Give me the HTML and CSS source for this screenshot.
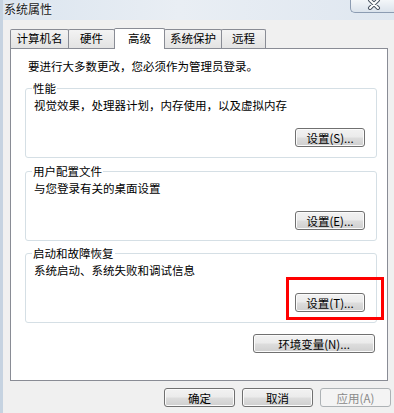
FILE: index.html
```html
<!DOCTYPE html>
<html lang="zh-CN">
<head>
<meta charset="utf-8">
<title>系统属性</title>
<link rel="stylesheet" href="styles.css">
</head>
<body>
<div class="window">
  <div class="titlebar">
    <span class="title">系统属性</span>
    <div class="close">
      <svg width="14" height="10" viewBox="0 0 14 10">
        <path d="M3 0 L11 8 M11 0 L3 8" stroke="#4b5563" stroke-width="4" stroke-linecap="round"/>
        <path d="M3 0 L11 8 M11 0 L3 8" stroke="#ffffff" stroke-width="2" stroke-linecap="round"/>
      </svg>
    </div>
  </div>
  <div class="client">
    <div class="tabs">
      <div class="tab t1">计算机名</div>
      <div class="tab t2">硬件</div>
      <div class="tab t3 active">高级</div>
      <div class="tab t4">系统保护</div>
      <div class="tab t5">远程</div>
    </div>
    <div class="panel">
      <p class="intro">要进行大多数更改，您必须作为管理员登录。</p>
      <fieldset class="group g1">
        <legend>性能</legend>
        <div class="group-body">
          <span class="desc">视觉效果，处理器计划，内存使用，以及虚拟内存</span>
          <button class="btn set">设置(S)...</button>
        </div>
      </fieldset>
      <fieldset class="group g2">
        <legend>用户配置文件</legend>
        <div class="group-body">
          <span class="desc">与您登录有关的桌面设置</span>
          <button class="btn set">设置(E)...</button>
        </div>
      </fieldset>
      <fieldset class="group g3">
        <legend>启动和故障恢复</legend>
        <div class="group-body">
          <span class="desc">系统启动、系统失败和调试信息</span>
          <button class="btn set">设置(T)...</button>
        </div>
      </fieldset>
      <div class="env-row">
        <button class="btn env">环境变量(N)...</button>
      </div>
    </div>
    <div class="actions">
      <button class="btn act">确定</button>
      <button class="btn act">取消</button>
      <button class="btn act" disabled>应用(A)</button>
    </div>
  </div>
  <div class="highlight"></div>
</div>
</body>
</html>
```
FILE: styles.css
```css
* { box-sizing: border-box; }
html, body {
  margin: 0;
  padding: 0;
}
body {
  width: 394px;
  height: 413px;
  overflow: hidden;
  background: #f0f0f0;
  font-family: "Noto Sans CJK SC", "Liberation Sans", sans-serif;
  font-size: 11.5px;
  line-height: 14px;
  color: #000;
}
.window {
  position: relative;
  width: 394px;
  height: 413px;
  border-left: 3px solid #c6d3e1;
}
.titlebar {
  height: 20px;
  display: flex;
  align-items: flex-start;
  background: linear-gradient(90deg, #dbe5ef 0%, #e9eef4 45%, #dfe7f0 100%);
}
.title {
  margin: 2px 0 0 1px;
  font-size: 12px;
  line-height: 14px;
  color: #1a1a1a;
  text-shadow: 0 0 4px #ffffff;
}
.close {
  margin-left: auto;
  margin-top: -1px;
  width: 44px;
  height: 14px;
  border: 1px solid #8c9cb2;
  border-right: none;
  border-radius: 0 0 0 5px;
  background: linear-gradient(#f3f6f9, #dbe3ec);
  display: flex;
  justify-content: center;
  align-items: flex-start;
  padding-top: 0;
  padding-left: 2px;
}
.client {
  padding: 8px 0 0 7px;
}
.tabs {
  display: flex;
  align-items: flex-end;
  height: 20px;
}
.tab {
  height: 19px;
  margin-left: -1px;
  border: 1px solid #898c95;
  border-bottom: none;
  border-radius: 2px 2px 0 0;
  background: linear-gradient(#f3f3f3, #e3e3e3);
  text-align: center;
  line-height: 17px;
  white-space: nowrap;
}
.t1 { margin-left: 0; width: 59px; }
.t2 { width: 47px; }
.t3 { width: 51px; }
.t4 { width: 58px; }
.t5 { width: 45px; }
.tab.active {
  position: relative;
  z-index: 1;
  height: 21px;
  margin-bottom: -1px;
  background: #ffffff;
  line-height: 18px;
}
.panel {
  width: 378px;
  height: 333px;
  border: 1px solid #898c95;
  background: #ffffff;
  padding: 10px 10px 0 14px;
}
.intro {
  margin: 0;
  padding-left: 3px;
}
.group {
  margin: 6px 0 0 0;
  padding: 3px 11px 10px 8px;
  border: 1px solid #d5dfe5;
  border-radius: 3px;
  min-width: 0;
}
.g1 { margin-top: 8px; }
.g3 { margin-top: 5px; }
.group legend {
  padding: 0 1px;
  margin-left: -2px;
  line-height: 14px;
}
.group-body {
  display: flex;
  flex-direction: column;
  align-items: flex-start;
}
.desc {
  display: block;
}
.btn {
  font-family: inherit;
  font-size: 11.5px;
  line-height: 14px;
  color: #000;
  height: 19px;
  padding: 0;
  border: 1px solid #707070;
  border-radius: 3px;
  background: linear-gradient(#f2f2f2 0%, #ebebeb 48%, #dddddd 52%, #cfcfcf 100%);
  box-shadow: inset 0 0 0 1px #fbfbfb;
  white-space: nowrap;
}
.set {
  align-self: flex-end;
  margin-top: 16px;
  width: 70px;
}
.env-row {
  display: flex;
  justify-content: flex-end;
  margin-top: 11px;
  padding-right: 2px;
}
.env { width: 122px; }
.actions {
  display: flex;
  justify-content: flex-end;
  gap: 7px;
  width: 381px;
  margin-top: 7px;
}
.act { width: 71px; }
.btn:disabled {
  color: #8a8a8a;
  border-color: #adb2b5;
  background: #f4f4f4;
  box-shadow: none;
}
.highlight {
  position: absolute;
  left: 283px;
  top: 277px;
  width: 98px;
  height: 43px;
  border: 3px solid #ff0000;
}
```
